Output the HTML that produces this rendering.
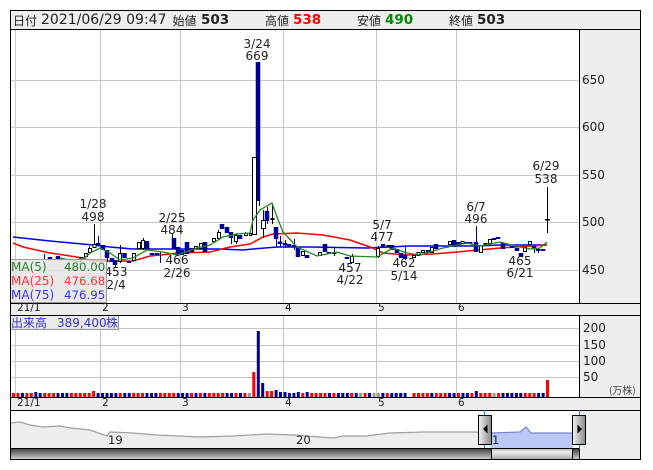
<!DOCTYPE html>
<html><head><meta charset="utf-8"><style>
html,body{margin:0;padding:0;background:#fff;width:653px;height:470px;overflow:hidden}
svg{display:block}
text{font-family:"DejaVu Sans","Noto Sans CJK JP",sans-serif;font-size:12px;fill:#222}
.j{font-family:"Noto Sans CJK JP",sans-serif;font-size:12px}
.b{font-weight:bold;font-size:13px}
.c{text-anchor:middle}
</style></head><body>
<svg width="653" height="470" viewBox="0 0 653 470" xmlns="http://www.w3.org/2000/svg">
<defs>
<linearGradient id="sd" x1="0" y1="0" x2="0" y2="1"><stop offset="0" stop-color="#444"/><stop offset="1" stop-color="#ccc"/></linearGradient>
<linearGradient id="st" x1="0" y1="0" x2="0" y2="1"><stop offset="0" stop-color="#bbb"/><stop offset=".3" stop-color="#eee"/><stop offset="1" stop-color="#aaa"/></linearGradient>
<linearGradient id="h" x1="0" y1="0" x2="1" y2="0"><stop offset="0" stop-color="#f2f2f2"/><stop offset="1" stop-color="#888"/></linearGradient>
</defs>
<!-- panels -->
<rect x="10.5" y="10.5" width="630" height="449" fill="#eee"/>
<rect x="11" y="30" width="568" height="273" fill="#fff"/>
<rect x="11" y="316" width="568" height="81" fill="#fff"/>
<rect x="11" y="411" width="568" height="37" fill="#fff"/>
<!-- grid -->
<path fill="none" stroke="#c8c8c8" d="M15.5 30V303M100.5 30V303M180.5 30V303M283.5 30V303M376.5 30V303M456.5 30V303M11 80.5H579M11 127.5H579M11 175.5H579M11 222.5H579M11 270.5H579M15.5 316V397M100.5 316V397M180.5 316V397M283.5 316V397M376.5 316V397M456.5 316V397M11 328.5H579M11 345.5H579M11 361.5H579M11 377.5H579"/>
<!-- MA -->
<polyline fill="none" stroke="#00f" stroke-width="1.5" points="13,237 50,241 93,245 110,247 133,249 180,249 220,249 243,250 253,249 277,247 310,247 367,248 410,246 477,246 500,245 547,245"/>
<polyline fill="none" stroke="#f00" stroke-width="1.5" points="13,243 23,247 50,253 77,257 93,261 113,261 133,261 150,256 180,253 210,252 230,247 250,244 263,237 273,234 297,233 323,235 350,240 370,247 383,253 407,255 433,254 457,252 500,248 547,245"/>
<!-- vol bars -->
<path fill="none" stroke="#f00" stroke-width="3" d="M13.5 397v-4M18 397v-4M26.9 397v-4M31.3 397v-4M44.7 397v-4M49.1 397v-4M53.6 397v-4M71.4 397v-4M75.8 397v-4M80.3 397v-4M84.7 397v-4M89.2 397v-4M93.6 397v-6M120.3 397v-4M133.7 397v-4M138.1 397v-4M142.6 397v-4M160.4 397v-4M164.8 397v-4M169.3 397v-4M173.7 397v-4M191.5 397v-4M200.4 397v-4M209.3 397v-4M213.8 397v-4M218.2 397v-4M222.7 397v-4M236 397v-4M244.9 397v-4M253.8 397v-25M267.2 397v-6M271.6 397v-6M302.8 397v-4M311.7 397v-4M316.1 397v-4M320.6 397v-4M325 397v-4M333.9 397v-4M351.7 397v-4M365.1 397v-4M387.3 397v-4M414 397v-4M418.5 397v-4M422.9 397v-4M427.4 397v-4M436.3 397v-4M440.7 397v-4M445.2 397v-4M458.5 397v-4M471.9 397v-4M480.8 397v-4M485.2 397v-4M489.7 397v-4M498.6 397v-4M525.3 397v-4M529.7 397v-4M534.2 397v-4M547.5 397v-17"/>
<path fill="none" stroke="#009" stroke-width="3" d="M22.4 397v-4M35.8 397v-5M40.2 397v-4M58 397v-4M62.5 397v-4M66.9 397v-4M98.1 397v-4M102.5 397v-4M107 397v-4M111.4 397v-4M115.9 397v-4M124.8 397v-4M129.2 397v-4M147 397v-4M151.5 397v-4M155.9 397v-4M178.2 397v-4M182.6 397v-4M187.1 397v-4M196 397v-4M204.9 397v-4M227.1 397v-4M231.6 397v-4M240.5 397v-4M258.3 397v-66M262.7 397v-14M276.1 397v-7M280.5 397v-5M285 397v-5M289.4 397v-4M293.9 397v-4M298.3 397v-5M307.2 397v-5M329.5 397v-4M338.4 397v-4M342.8 397v-4M347.3 397v-4M356.2 397v-4M369.5 397v-4M382.9 397v-4M391.8 397v-4M396.2 397v-4M400.7 397v-4M405.1 397v-4M431.8 397v-4M449.6 397v-4M454.1 397v-4M463 397v-4M467.4 397v-4M476.3 397v-6M511.9 397v-4M516.4 397v-4M520.8 397v-4M503 397v-4M507.5 397v-4M538.6 397v-4M543.1 397v-4"/>
<path fill="none" stroke="#999" stroke-width="3" d="M249.4 397v-4M360.6 397v-4M374 397v-4M378.4 397v-4M494.1 397v-4"/>
<!-- candle wicks -->
<path fill="none" stroke="#000" d="M94.5 224V247M84.5 253V258M89.5 246V254M44.5 254V259M80.5 258V262M120.5 245V263M143.5 238V250M218.5 230V240M236.5 233V244M263.5 210V238M272.5 205V224M334.5 247V256M352.5 254V263M378.5 246V258M245.5 232V236M547.5 187V233"/>
<path fill="none" stroke="#009" d="M98.5 236V246M107.5 250V262M115.5 260V268M160.5 252V263M172.5 234V248M231.5 232V244M267.5 207V224M276.5 227V247M280.5 236V247M285.5 240V248M294.5 239V250M405.5 245V260M476.5 226V252M534.5 248V253M538.5 248V253M259.5 200V206"/>
<!-- blue bodies -->
<path fill="none" stroke="#009" stroke-width="4.500" d="M50 257V260M58 256V260M98 243V246M103 245V250M107 250V258M112 258V262M115 260V265M124.500 253V258M129 261V263M147 241V249M152 253V255M157 253V255M174 238V249M178 247V255M182 250V255M187 242V254M192 248V252M205 242V252M222 224V229M227 227V233M231 232V238M240 235V239M258 62V201M267 211V221M276 227V239M280 241.500V244M285 243V245.500M289 244V247M294 245V247M298 247V257M307 255V258M325 244V252M329 252V254M347 257V259M383 244V247M392 245V250M397 249V253M401 253V258M405 255V259M428 250V253M436 244V249M454 240V247M458 242V246M470 242V244M466 242V244M476 242V252M494 238V240M498 237V239M503 243V249M512 246V248M517 248V251M521 253V257M534 246V249M538 249V251M543 249V251"/>
<!-- white bodies -->
<path fill="#fff" stroke="#000" d="M80 257.500h3v1.500h-3zM84.500 253.500h3v3h-3zM88.500 248.500h3v4h-3zM93 244.500h3v3h-3zM118.500 253.500h3v8h-3zM132.500 253.500h3v7h-3zM137.500 242.500h3v6h-3zM141.500 240.500h3v8h-3zM194.500 246.500h3v2h-3zM199.500 243.500h3v5h-3zM212.500 238.500h3v3h-3zM217.500 232.500h3v6h-3zM234.500 235.500h3v6h-3zM244.500 233.500h3v2h-3zM249.500 233.500h2v2h-2zM252.500 157.500h4v77h-4zM261.500 220.500h4v8h-4zM271 218.500h3v1h-3zM301.500 251.500h3v4h-3zM318.500 252.500h3v3h-3zM333 252.500h3v1h-3zM350.500 256.500h3v6h-3zM376.500 248.500h3v8h-3zM387 245.500h3v1h-3zM412.500 255.500h3v2h-3zM417 252.500h3v3h-3zM421.500 250.500h3v2h-3zM430.500 247.500h3v5h-3zM448.500 241.500h3v3h-3zM461 241.500h3v2h-3zM479.500 245.500h3v7h-3zM484 243.500h3v1h-3zM488.500 239.500h3v4h-3zM523.500 247.500h3v4h-3zM528.500 241.500h3v3h-3zM545.500 219.500h4v0.500h-4z"/>
<!-- green MA -->
<polyline fill="none" stroke="#282" stroke-width="1.300" points="60,258 80,262 90,253 100,248 110,253 120,260 133,258 147,250 163,252 177,255 197,248 210,245 223,237 237,234 250,233 253,220 260,210 272,203 277,217 283,232 297,247 317,256 337,252 350,256 377,257 393,248 407,253 420,255 443,248 467,243 480,246 500,242 520,247 530,249 540,248 547,242"/>
<!-- annotations -->
<text class="c" x="257" y="48">3/24</text><text class="c" x="257" y="60">669</text>
<text class="c" x="93" y="208">1/28</text><text class="c" x="93" y="221">498</text>
<text class="c" x="172" y="222">2/25</text><text class="c" x="172" y="234">484</text>
<text class="c" x="177" y="264">466</text><text class="c" x="177" y="277">2/26</text>
<text class="c" x="116" y="276">453</text><text class="c" x="116" y="289">2/4</text>
<text class="c" x="382" y="229">5/7</text><text class="c" x="382" y="241">477</text>
<text class="c" x="350" y="272">457</text><text class="c" x="350" y="284">4/22</text>
<text class="c" x="404" y="267">462</text><text class="c" x="404" y="280">5/14</text>
<text class="c" x="476" y="211">6/7</text><text class="c" x="476" y="223">496</text>
<text class="c" x="520" y="265">465</text><text class="c" x="520" y="277">6/21</text>
<text class="c" x="546" y="170">6/29</text><text class="c" x="546" y="183">538</text>
<!-- legend -->
<rect x="10.500" y="259.500" width="96" height="43" fill="#e4e4e4" fill-opacity=".8" stroke="#999"/>
<text x="11" y="271" style="fill:#2a7a2a">MA(5)</text><text x="64" y="271" style="font-size:11.800px;fill:#2a7a2a">480.00</text>
<text x="11" y="285" style="fill:#f33">MA(25)</text><text x="64" y="285" style="font-size:11.800px;fill:#f33">476.68</text>
<text x="11" y="299" style="fill:#33f">MA(75)</text><text x="64" y="299" style="font-size:11.800px;fill:#33f">476.95</text>
<!-- volume label -->
<rect x="10.500" y="315.500" width="108" height="14" fill="#e8e8e8" fill-opacity=".85" stroke="#999"/>
<text x="11" y="327" style="fill:#33c"><tspan class="j" style="fill:#33c">出来高</tspan><tspan x="57">389,400</tspan><tspan class="j" x="106" style="fill:#33c">株</tspan></text>
<!-- navigator -->
<polygon fill="#eee" stroke="none" points="11,423 20,422 30,425 43,427 60,426 70,428 90,430 107,436 110,432 133,433 157,435 200,437 233,436 267,434 293,435 320,437 333,438 343,436 366,436 390,433 423,432 476,432 491,433 491,448 11,448"/>
<polyline fill="none" stroke="#a0a0a0" stroke-width="1.200" points="11,423 20,422 30,425 43,427 60,426 70,428 90,430 107,436 110,432 133,433 157,435 200,437 233,436 267,434 293,435 320,437 333,438 343,436 366,436 390,433 423,432 476,432 491,433"/>
<polygon fill="#b9c8f5" points="491,433 520,432 526,427 531,433 573,433 573,448 491,448"/>
<polyline fill="none" stroke="#7a88cc" stroke-width="1.200" points="491,433 520,432 526,427 531,433 573,433"/>
<rect x="579" y="411" width="61" height="37" fill="#eee"/>
<text x="108" y="444" style="font-size:11.500px">19</text><text x="296" y="444" style="font-size:11.500px">20</text><text x="492" y="444" style="font-size:11.500px">1</text>
<!-- scrollbar -->
<rect x="11" y="449" width="480" height="10" fill="url(#sd)"/>
<rect x="492" y="449" width="80" height="10" fill="url(#st)"/>
<rect x="573" y="449" width="6" height="10" fill="url(#sd)"/>
<!-- borders -->
<path fill="none" stroke="#000" d="M10.500 10.500H640.500V459.500H10.500ZM10.500 29.500H640.500M579.500 29.500V303M10.500 303.500H640.500M10.500 315.500H640.500M579.500 315.500V397M10.500 397.500H640.500M10.500 410.500H640.500M10.500 448.500H579.500M579.500 448.500V459.500M491.500 448.500V459.500M572.500 448.500V459.500"/>
<!-- cyan lines -->
<path stroke="#19c" fill="none" d="M484.500 410V448M579.500 410V448"/>
<!-- handles -->
<rect x="478.500" y="415.500" width="13" height="29" fill="url(#h)" stroke="#000"/>
<rect x="572.500" y="415.500" width="13" height="29" fill="url(#h)" stroke="#000"/>
<path d="M483 429l4.500-4.500v9zM577.500 424.500l4.500 4.500-4.500 4.500z" fill="#000"/>
<!-- axis text -->
<text x="582" y="84">650</text><text x="582" y="131">600</text><text x="582" y="179">550</text><text x="582" y="226">500</text><text x="582" y="274">450</text>
<text x="583" y="332">200</text><text x="583" y="349">150</text><text x="583" y="365">100</text><text x="583" y="381">50</text>
<text x="609" y="394" style="font-size:10px;fill:#444"><tspan class="j" style="font-size:10px;fill:#444">(万株)</tspan></text>
<text x="17" y="311" style="font-size:10.500px">21/1</text><text x="102" y="311" style="font-size:10.500px">2</text><text x="182" y="311" style="font-size:10.500px">3</text><text x="285" y="311" style="font-size:10.500px">4</text><text x="378" y="311" style="font-size:10.500px">5</text><text x="458" y="311" style="font-size:10.500px">6</text>
<text x="17" y="406" style="font-size:10.500px">21/1</text><text x="102" y="406" style="font-size:10.500px">2</text><text x="182" y="406" style="font-size:10.500px">3</text><text x="285" y="406" style="font-size:10.500px">4</text><text x="378" y="406" style="font-size:10.500px">5</text><text x="458" y="406" style="font-size:10.500px">6</text>
<!-- header -->
<text class="j" x="13" y="25">日付</text>
<text x="41" y="24" style="font-size:14px">2021/06/29 09:47</text>
<text class="j" x="172.500" y="25">始値</text><text class="b" x="201" y="24" style="font-size:13.500px">503</text>
<text class="j" x="265" y="25">高値</text><text class="b" x="293" y="24" style="font-size:13.500px;fill:#f00">538</text>
<text class="j" x="357" y="25">安値</text><text class="b" x="385" y="24" style="font-size:13.500px;fill:#080">490</text>
<text class="j" x="449" y="25">終値</text><text class="b" x="477" y="24" style="font-size:13.500px">503</text>
</svg>
</body></html>
